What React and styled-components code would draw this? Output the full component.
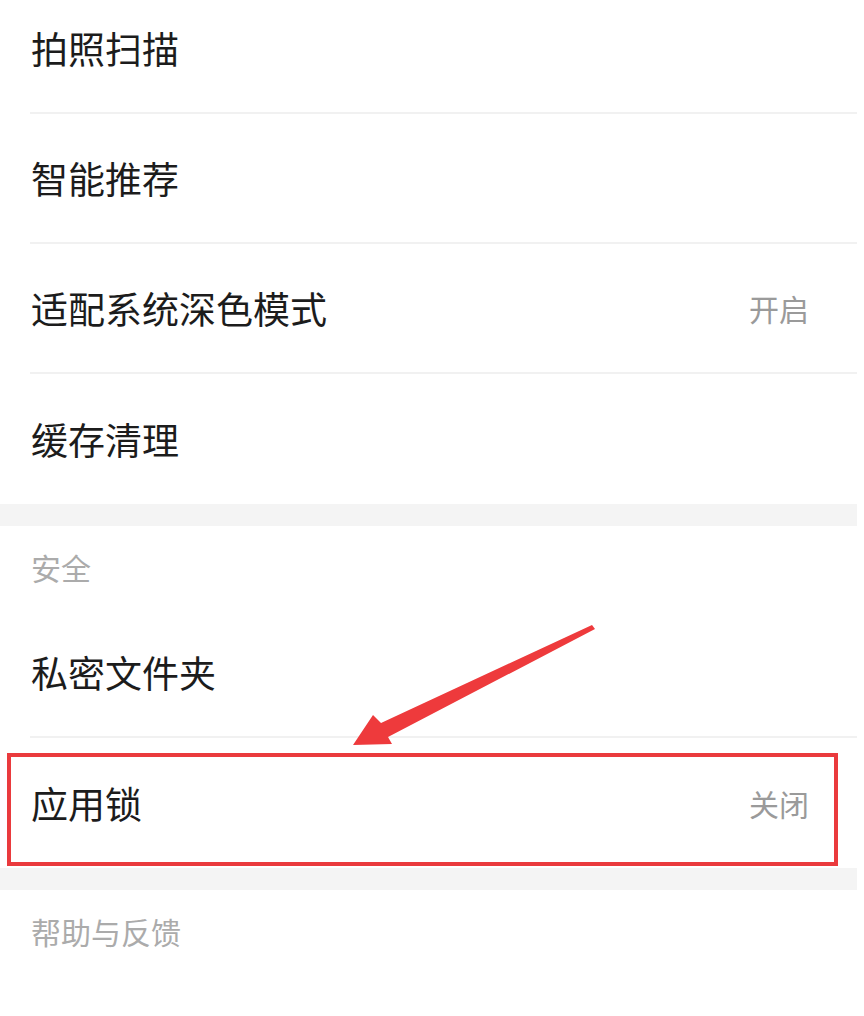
import React from 'react';
import styled, { createGlobalStyle } from 'styled-components';

const GlobalStyle = createGlobalStyle`
  html, body {
    margin: 0;
    padding: 0;
    background: #ffffff;
    overflow: hidden;
  }
  body {
    font-family: "Noto Sans CJK SC", "Noto Sans", sans-serif;
  }
`;

const sections = [
  {
    items: [
      { label: '拍照扫描' },
      { label: '智能推荐' },
      { label: '适配系统深色模式', value: '开启' },
      { label: '缓存清理' },
    ],
  },
  {
    title: '安全',
    items: [
      { label: '私密文件夹' },
      { label: '应用锁', value: '关闭', marked: true },
    ],
  },
  {
    title: '帮助与反馈',
    items: [{ label: '意见反馈' }],
  },
];

const App = () => {
  return (
    <>
      <GlobalStyle />
      <Page>
        {sections.map((section, si) => (
          <Section key={si}>
            {section.title && <SectionTitle>{section.title}</SectionTitle>}
            {section.items.map((item, ii) => (
              <Row key={item.label} $last={ii === section.items.length - 1}>
                <Label>{item.label}</Label>
                {item.value && <Value>{item.value}</Value>}
                {item.marked && <Highlight />}
              </Row>
            ))}
          </Section>
        ))}
        {/* annotation arrow pointing at the highlighted row */}
        <Arrow viewBox="0 0 864 1016">
          <polygon points="353,745 373,715 381,723 592,625 595,629 388,737 392,744" fill="#ee3a3c" />
        </Arrow>
      </Page>
    </>
  );
};

const Page = styled.div`
  position: relative;
  width: 857px;
  margin-top: -16px;
  background: #f4f4f4;
  display: flex;
  flex-direction: column;
  gap: 22px;
`;

const Section = styled.section`
  background: #ffffff;
  display: flex;
  flex-direction: column;
`;

const SectionTitle = styled.div`
  height: 82px;
  display: flex;
  align-items: center;
  padding-left: 31px;
  font-size: 30px;
  color: #ababab;
`;

const Row = styled.div`
  position: relative;
  height: 130px;
  margin-left: 30px;
  padding-right: 48px;
  display: flex;
  align-items: center;
  justify-content: space-between;
  box-sizing: border-box;
  border-bottom: ${({ $last }) => ($last ? 'none' : '2px solid #f1f1f1')};
`;

const Label = styled.span`
  font-size: 37px;
  color: #1c1c1c;
  padding-left: 1px;
`;

const Value = styled.span`
  font-size: 30px;
  color: #9a9a9a;
`;

const Highlight = styled.div`
  position: absolute;
  top: 15px;
  left: -23px;
  right: 19px;
  bottom: 2px;
  border: 4px solid #ea3a3d;
  pointer-events: none;
`;

const Arrow = styled.svg`
  position: absolute;
  top: 16px;
  left: 0;
  width: 864px;
  height: 1016px;
  pointer-events: none;
`;

export default App;
